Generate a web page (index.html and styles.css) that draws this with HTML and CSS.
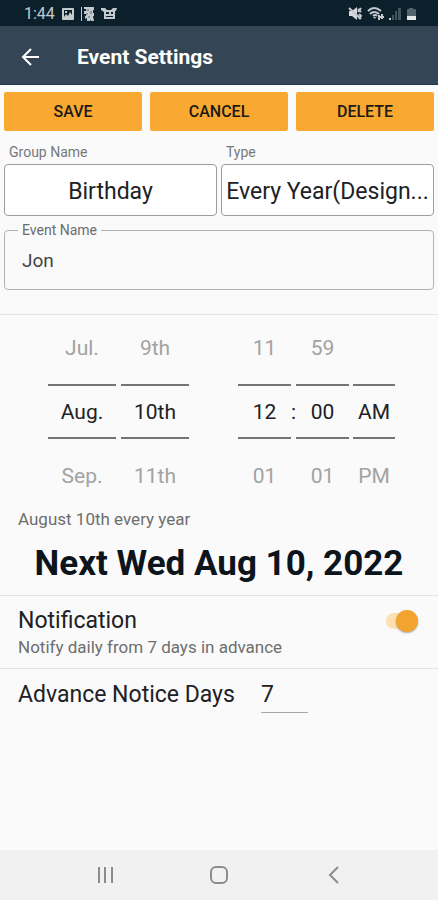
FILE: index.html
```html
<!DOCTYPE html>
<html lang="en">
<head>
<meta charset="utf-8">
<meta name="viewport" content="width=device-width, initial-scale=1">
<title>Event Settings</title>
<link rel="stylesheet" href="styles.css">
</head>
<body>
<div class="status">
  <span class="clock">1:44</span>
  <svg class="status-left" width="56" height="16" viewBox="0 0 56 16" fill="#c3c9cc" aria-hidden="true">
    <path fill-rule="evenodd" d="M2 2h10q1 0 1 1v10q0 1-1 1H2q-1 0-1-1V3q0-1 1-1zM3 4v8h8V4z"/>
    <path d="M3 11l2-3 2 2 2-4 2 3v3H3zM4 5h2v2H4z"/>
    <path d="M20 1h1v14h-1z"/>
    <path d="M23 1h10v3h-1v3h1v3h-1l1 5h-3l-1-2v2h-3v-3l-2 1v-3h1V8h-2V5h2V3h-2z"/>
    <path d="M27 3v2M25 8h2M30 5v3M28 10v2" stroke="#0b202b" fill="none" opacity=".6"/>
    <path fill-rule="evenodd" d="M40 2h4l2 2h4l2-2h4l-1 3h-1v8H43V6l-3-2zM45 6v2h3V6zM50 6v2h2V6zM45 10v1h7v-1z"/>
  </svg>
  <svg class="status-right" width="70" height="16" viewBox="0 0 70 16" aria-hidden="true">
    <path d="M1 5h3l5-4v13l-5-4H1z" fill="#d5dadc"/>
    <path d="M1 2l12 11M10 3l3 3M13 2l-3 4M11 8l2 2-2 3" fill="none" stroke="#c3c9cc" stroke-width="2"/>
    <g fill="none" stroke="#c3c9cc" stroke-width="2"><path d="M20 5q6-6 13 0M22 8q4-4 9 0M25 10q2-2 4 0M30 11h6M31 9v5M34 8v5"/></g>
    <path d="M25 11h3l-1 2z" fill="#c3c9cc"/>
    <path d="M41 12h2v2h-2z" fill="#c3c9cc"/>
    <path d="M44 9h2v5h-2zM47 5h2v9h-2zM50 2h3v12h-3z" fill="#40545e"/>
    <path d="M61 2h4v1h2q1 0 1 1v6h-9V4q0-1 1-1h1z" fill="#52646d"/>
    <path d="M59 10h9v4h-9z" fill="#e5e8e9"/>
  </svg>
</div>
<header class="appbar">
  <button class="back" type="button" aria-label="Back">
    <svg width="20" height="18" viewBox="0 0 20 18" fill="none" stroke="#fff" stroke-width="2"><path d="M19 9H4M11 1L3 9l8 8"/></svg>
  </button>
  <h1>Event Settings</h1>
</header>
<main>
  <div class="actions">
    <button type="button">SAVE</button>
    <button type="button">CANCEL</button>
    <button type="button">DELETE</button>
  </div>
  <div class="choices">
    <div class="choice">
      <label for="group">Group Name</label>
      <select id="group"><option>Birthday</option></select>
    </div>
    <div class="choice">
      <label for="type">Type</label>
      <select id="type"><option>Every Year(Design...</option></select>
    </div>
  </div>
  <fieldset class="event">
    <legend><label for="event">Event Name</label></legend>
    <input id="event" type="text" value="Jon">
  </fieldset>
  <section class="pickers">
    <div class="picker date">
      <div class="wheel wide"><button type="button">Jul.</button><input aria-label="Month" value="Aug."><button type="button">Sep.</button></div>
      <div class="wheel wide"><button type="button">9th</button><input aria-label="Day" value="10th"><button type="button">11th</button></div>
    </div>
    <div class="picker time">
      <div class="wheel"><button type="button">11</button><input aria-label="Hour" value="12"><button type="button">01</button></div>
      <span class="colon">:</span>
      <div class="wheel"><button type="button">59</button><input aria-label="Minute" value="00"><button type="button">01</button></div>
      <div class="wheel narrow"><span></span><input aria-label="AM or PM" value="AM"><button type="button">PM</button></div>
    </div>
  </section>
  <p class="repeat">August 10th every year</p>
  <p class="next">Next Wed Aug 10, 2022</p>
  <section class="notify">
    <div>
      <label class="title" for="notify">Notification</label>
      <p class="note">Notify daily from 7 days in advance</p>
    </div>
    <input class="switch" id="notify" type="checkbox" role="switch" checked>
  </section>
  <section class="advance">
    <label class="title" for="days">Advance Notice Days</label>
    <input id="days" type="text" inputmode="numeric" value="7">
  </section>
</main>
<nav class="navbar">
  <button type="button" aria-label="Recent apps"><svg width="20" height="20" viewBox="0 0 20 20" stroke="#8c8c8c" stroke-width="2"><path d="M4 2v16M10 2v16M17 2v16"/></svg></button>
  <button type="button" aria-label="Home"><svg width="20" height="20" viewBox="0 0 20 20" fill="none" stroke="#8c8c8c" stroke-width="2"><rect x="2" y="2" width="16" height="16" rx="5"/></svg></button>
  <button type="button" aria-label="Back"><svg width="20" height="20" viewBox="0 0 20 20" fill="none" stroke="#8c8c8c" stroke-width="2"><path d="M15 2l-8 8 8 8"/></svg></button>
</nav>
</body>
</html>
```
FILE: styles.css
```css
* { box-sizing: border-box; }
body {
  margin: 0;
  min-height: 100vh;
  display: flex;
  flex-direction: column;
  background: #fafafa;
  color: #202124;
  font-family: Roboto, "Liberation Sans", sans-serif;
}
button, input, select { font: inherit; color: inherit; }
button { border: 0; padding: 0; background: none; }
svg { display: block; }
h1, p { margin: 0; }

.status {
  display: flex;
  align-items: center;
  height: 26px;
  padding: 2px 20px 0 24px;
  background: #0b202b;
}
.clock { color: #c3c9cc; font-size: 16px; line-height: 24px; }
.status-left { margin-left: 6px; }
.status-right { margin-left: auto; }

.appbar {
  display: flex;
  align-items: center;
  gap: 37px;
  height: 59px;
  padding: 4px 20px 0;
  background: #344655;
  border-bottom: 1px solid #1d3a4e;
}
.appbar h1 { color: #fff; font-size: 21px; line-height: 28px; font-weight: 700; }

main { flex: 1; }
.actions { display: flex; gap: 8px; padding: 7px 4px 0; }
.actions button {
  flex: 1;
  height: 39px;
  border-radius: 2px;
  background: #f9a931;
  color: #1c1a16;
  font-size: 16px;
  font-weight: 500;
}
.choices { display: flex; gap: 4px; padding: 13px 4px 0; }
.choice { flex: 1; min-width: 0; }
.choice label {
  display: block;
  padding-left: 5px;
  color: #77797b;
  font-size: 14px;
  line-height: 16px;
}
.choice select {
  appearance: none;
  display: block;
  width: 100%;
  height: 52px;
  margin-top: 4px;
  padding: 2px 2px 0;
  border: 1px solid #9a9ea2;
  border-radius: 4px;
  background: #fff;
  font-size: 23px;
  text-align: center;
}
.event {
  margin: 6px 4px 24px;
  padding: 0 17px 14px;
  border: 1px solid #b2b2b2;
  border-radius: 4px;
}
.event legend {
  margin-left: -4px;
  padding: 0 4px;
  color: #6b6d6f;
  font-size: 14px;
  line-height: 16px;
}
.event input {
  display: block;
  width: 100%;
  height: 30px;
  margin-top: 7px;
  padding: 0;
  border: 0;
  background: none;
  color: #444;
  font-size: 19px;
}

.pickers {
  display: flex;
  justify-content: space-between;
  padding: 0 43px 0 48px;
  border-top: 1px solid #e4e4e4;
}
.picker { display: flex; gap: 5px; }
.picker.time { gap: 0; }
.wheel { width: 53px; display: grid; grid-template-rows: 64px 64px 64px; }
.wheel.wide { width: 68px; }
.wheel.narrow { width: 42px; margin-left: 4px; }
.wheel button { padding-top: 2px; color: #a2a2a2; font-size: 21px; text-align: center; }
.wheel input {
  width: 100%;
  height: 55px;
  align-self: center;
  padding: 2px 0 0;
  border: 2px solid #747474;
  border-width: 2px 0;
  border-radius: 0;
  background: none;
  font-size: 21px;
  text-align: center;
}
.colon { width: 5px; font-size: 21px; line-height: 194px; height: 192px; }

.repeat { padding: 2px 18px 0; color: #6e6e6e; font-size: 17px; line-height: 20px; }
.next {
  padding: 15px 0 11px;
  color: #0c141c;
  font-size: 35px;
  line-height: 40px;
  font-weight: 700;
  text-align: center;
}
.title { display: block; font-size: 23px; line-height: 28px; }
.notify {
  display: flex;
  justify-content: space-between;
  padding: 11px 20px 9px 18px;
  border-top: 1px solid #e4e4e4;
}
.note { color: #6e6e6e; font-size: 17px; line-height: 24px; }
.switch {
  appearance: none;
  display: flex;
  align-items: center;
  justify-content: flex-end;
  width: 32px;
  height: 16px;
  margin: 6px 0 0;
  border-radius: 8px;
  background: #fde0b3;
}
.switch::before {
  content: "";
  width: 22px;
  height: 22px;
  flex: none;
  border-radius: 50%;
  background: #f2a42f;
  box-shadow: 0 1px 2px #0005;
}
.advance {
  display: flex;
  gap: 26px;
  padding: 12px 18px;
  border-top: 1px solid #e4e4e4;
}
.advance input {
  width: 47px;
  height: 32px;
  padding: 0 0 4px;
  border: 0;
  border-bottom: 1px solid #a8a8a8;
  border-radius: 0;
  background: none;
  font-size: 23px;
}

.navbar {
  display: flex;
  justify-content: center;
  gap: 94px;
  height: 50px;
  background: #f1f1f1;
}
.navbar button { display: flex; align-items: center; }
```
